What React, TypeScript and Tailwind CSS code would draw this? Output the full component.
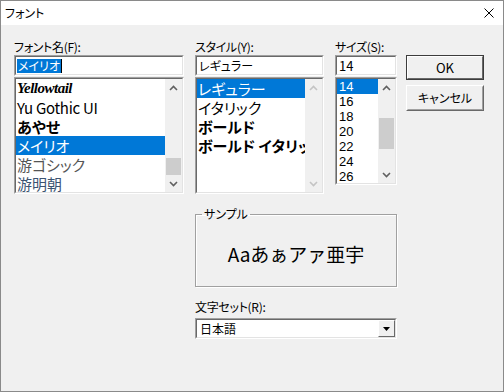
import type { ReactNode } from 'react'

const ui = "font-['Noto_Sans_CJK_JP',sans-serif] [font-feature-settings:'palt']"

// 3D sunken frame used by edits, lists and the combo box
function Sunken({ className, children }: { className: string; children: ReactNode }) {
  return (
    <div className={`border border-t-[#a0a0a0] border-l-[#a0a0a0] border-b-white border-r-white ${className}`}>
      <div className="h-full border border-t-[#696969] border-l-[#696969] border-b-[#e3e3e3] border-r-[#e3e3e3] bg-white overflow-hidden">
        {children}
      </div>
    </div>
  )
}

function Chevron({ down, color }: { down?: boolean; color: string }) {
  return (
    <svg width="9" height="6" viewBox="0 0 9 6" className={down ? 'rotate-180' : ''}>
      <polyline points="1,5 4.5,1.5 8,5" fill="none" stroke={color} strokeWidth="1.6" />
    </svg>
  )
}

function ScrollBar({ spacer, thumb, disabled }: { spacer?: string; thumb?: string; disabled?: boolean }) {
  const c = disabled ? '#c4c4c4' : '#606060'
  return (
    <div className="w-[17px] h-full bg-[#f0f0f0] flex flex-col">
      <div className="h-[17px] flex items-center justify-center"><Chevron color={c} /></div>
      {!disabled && <div className={spacer} />}
      {!disabled && <div className={`${thumb} mx-[1px] bg-[#cdcdcd]`} />}
      <div className="flex-1" />
      <div className="h-[17px] flex items-center justify-center"><Chevron down color={c} /></div>
    </div>
  )
}

const fonts = [
  { name: 'Yellowtail', cls: "font-['Liberation_Serif',serif] italic font-bold tracking-[-0.5px]" },
  { name: 'Yu Gothic UI', cls: 'tracking-[-0.3px]' },
  { name: 'あやせ', cls: 'font-bold' },
  { name: 'メイリオ', cls: '', sel: true },
  { name: '游ゴシック', cls: 'text-[#555]' },
  { name: '游明朝', cls: 'text-[#3c5472]' },
]

const styles = [
  { name: 'レギュラー', cls: '', sel: true },
  { name: 'イタリック', cls: '' },
  { name: 'ボールド', cls: 'font-bold' },
  { name: 'ボールド イタリック', cls: 'font-bold' },
]

const sizes = ['14', '16', '18', '20', '22', '24', '26']

export default function App() {
  return (
    <div className={`w-[504px] h-[392px] border border-[#8a8a8a] bg-[#f0f0f0] text-black text-[12px] flex flex-col ${ui}`}>

      {/* Title bar */}
      <div className="h-[24px] bg-white flex items-center justify-between pl-[4px] pr-[9px]">
        <span className="leading-none">フォント</span>
        <svg width="10" height="10" viewBox="0 0 10 10">
          <path d="M0.5 0.5 L9.5 9.5 M9.5 0.5 L0.5 9.5" stroke="#000" strokeWidth="1" />
        </svg>
      </div>

      <div className="flex pl-[13px] pt-[13px]">

        {/* Font name */}
        <div className="w-[170px] flex flex-col">
          <div className="h-[17px] leading-[17px] tracking-[-0.3px]">フォント名(F):</div>
          <Sunken className="h-[21px]">
            <div className="h-full flex items-center pl-[1px]">
              <span className="bg-[#0078d7] text-white leading-[14px] px-[1px]">メイリオ</span>
              <span className="w-[1px] h-[14px] bg-black" />
            </div>
          </Sunken>
          <Sunken className="mt-[1px] h-[117px]">
            <div className="h-full flex">
              <div className="flex-1 flex flex-col">
                {fonts.map(f => (
                  <div
                    key={f.name}
                    className={`h-[19px] leading-[19px] text-[15px] pl-[1px] whitespace-nowrap ${f.sel ? 'bg-[#0078d7] text-white' : ''} ${f.cls}`}
                  >
                    {f.name}
                  </div>
                ))}
              </div>
              <ScrollBar spacer="h-[62px]" thumb="h-[17px]" />
            </div>
          </Sunken>
        </div>

        {/* Style + size + sample + charset */}
        <div className="ml-[11px] w-[202px] flex flex-col">
          <div className="flex gap-[11px]">
            <div className="w-[129px] flex flex-col">
              <div className="h-[17px] leading-[17px] tracking-[-0.3px]">スタイル(Y):</div>
              <Sunken className="h-[21px]">
                <div className="h-full flex items-center pl-[2px]">レギュラー</div>
              </Sunken>
              <Sunken className="mt-[1px] h-[117px]">
                <div className="h-full flex">
                  <div className="flex-1 min-w-0 flex flex-col">
                    {styles.map(s => (
                      <div
                        key={s.name}
                        className={`h-[19px] leading-[19px] text-[15px] pl-[1px] whitespace-nowrap overflow-hidden ${s.sel ? 'bg-[#0078d7] text-white' : ''} ${s.cls}`}
                      >
                        {s.name}
                      </div>
                    ))}
                  </div>
                  <ScrollBar disabled />
                </div>
              </Sunken>
            </div>

            <div className="w-[62px] flex flex-col">
              <div className="h-[17px] leading-[17px] tracking-[-0.3px]">サイズ(S):</div>
              <Sunken className="h-[21px]">
                <div className="h-full flex items-center pl-[2px] text-[13px]">14</div>
              </Sunken>
              <Sunken className="mt-[1px] h-[108px]">
                <div className="h-full flex">
                  <div className="flex-1 flex flex-col font-['Liberation_Sans',sans-serif] text-[13px]">
                    {sizes.map((s, i) => (
                      <div
                        key={s}
                        className={`h-[15px] leading-[15px] pl-[2px] ${i === 0 ? 'bg-[#0078d7] text-white' : ''}`}
                      >
                        {s}
                      </div>
                    ))}
                  </div>
                  <ScrollBar spacer="h-[22px]" thumb="h-[31px]" />
                </div>
              </Sunken>
            </div>
          </div>

          {/* Sample */}
          <fieldset className="mt-[13px] border border-[#a0a0a0] shadow-[inset_1px_1px_0_#fff,1px_1px_0_#fff]">
            <legend className="ml-[6px] px-[2px] leading-[14px]">サンプル</legend>
            <div className="h-[65px] flex items-center justify-center text-[19px] leading-none [font-feature-settings:normal]">
              Aaあぁアァ亜宇
            </div>
          </fieldset>

          {/* Charset */}
          <div className="mt-[11px] h-[17px] leading-[17px] tracking-[-0.3px]">文字セット(R):</div>
          <Sunken className="mt-[3px] h-[21px]">
            <div className="h-full flex">
              <div className="flex-1 flex items-center pl-[3px]">日本語</div>
              <div className="w-[17px] border border-t-white border-l-white border-b-[#696969] border-r-[#696969] bg-[#f0f0f0] flex items-center justify-center">
                <svg width="7" height="4" viewBox="0 0 7 4">
                  <polygon points="0,0 7,0 3.5,4" fill="#000" />
                </svg>
              </div>
            </div>
          </Sunken>
        </div>

        {/* Buttons */}
        <div className="ml-[9px] w-[78px] pt-[17px] flex flex-col">
          <button className="h-[25px] border border-[#3c3c3c] bg-[#f0f0f0]">
            <div className="h-full border border-t-white border-l-white border-b-[#696969] border-r-[#696969] flex items-center justify-center text-[13px]">
              OK
            </div>
          </button>
          <button className="mt-[5px] h-[26px] border border-t-white border-l-white border-b-[#696969] border-r-[#696969] bg-[#f0f0f0]">
            <div className="h-full border border-transparent border-b-[#a0a0a0] border-r-[#a0a0a0] flex items-center justify-center">
              キャンセル
            </div>
          </button>
        </div>

      </div>
    </div>
  )
}
